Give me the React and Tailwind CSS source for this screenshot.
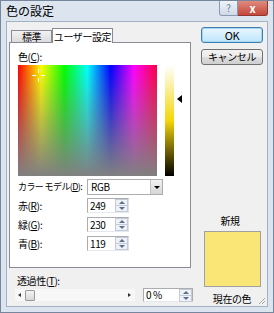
export default function App() {
  const Spin = () => (
    <div className="w-[13px] h-[13px] flex flex-col border border-[#c3cbd6] bg-[#eef2f7] shrink-0">
      <div className="flex-1 flex items-center justify-center border-b border-[#c3cbd6]">
        <div className="w-0 h-0 border-l-[3px] border-r-[3px] border-b-[3px] border-l-transparent border-r-transparent border-b-[#5a6f8e]" />
      </div>
      <div className="flex-1 flex items-center justify-center">
        <div className="w-0 h-0 border-l-[3px] border-r-[3px] border-t-[3px] border-l-transparent border-r-transparent border-t-[#5a6f8e]" />
      </div>
    </div>
  );
  const NumRow = ({ label, acc, value }) => (
    <div className="flex items-center h-[15px]">
      <span className="w-[69px] leading-[12px] whitespace-nowrap">
        {label}(<u>{acc}</u>):
      </span>
      <div className="w-[42px] h-[15px] flex items-center border border-[#abadb3] border-b-[#e3e9ef] border-r-[#dbdfe6] bg-white">
        <span className="ml-[2px] flex-1 leading-[12px]">{value}</span>
        <Spin />
      </div>
    </div>
  );
  return (
    <div className="w-[274px] h-[313px] bg-[#dbe4ef] border border-[#76869c] flex flex-col font-['Noto_Sans_CJK_JP',sans-serif] text-[10px] tracking-[-0.4px] text-black overflow-hidden">
      {/* title bar */}
      <div className="h-[20px] flex items-start shrink-0">
        <span className="ml-[5px] mt-[3px] text-[12px] leading-[14px] tracking-normal">色の設定</span>
        <div className="ml-auto mr-[5px] flex">
          <div className="w-[19px] h-[15px] rounded-bl-[3px] border border-t-0 border-[#8a9ab0] bg-[linear-gradient(to_bottom,#eef3f8,#cfdae7)] flex items-center justify-center text-[10px] leading-[10px] text-[#6b7c95]">
            ?
          </div>
          <div className="w-[30px] h-[15px] rounded-br-[3px] border border-t-0 border-l-0 border-[#8a3a32] bg-[linear-gradient(to_bottom,#e08b80,#c5473a)] flex items-center justify-center text-[11px] leading-[11px] font-bold text-white">
            x
          </div>
        </div>
      </div>
      {/* client area */}
      <div className="mx-[5px] mb-[5px] h-[286px] shrink-0 bg-[#f0f0f0] border border-[#a3b1c4] flex relative overflow-hidden">
        {/* left column */}
        <div className="flex flex-col pl-[2px] pt-[6px] shrink-0">
          <div className="flex items-end h-[14px] pl-[2px] relative z-10 shrink-0">
            <div className="w-[41px] h-[12px] border border-b-0 border-[#898c95] bg-[linear-gradient(to_bottom,#f2f2f2,#dcdcdc)] flex items-center justify-center leading-[10px] whitespace-nowrap">
              標準
            </div>
            <div className="w-[61px] h-[15px] -mb-px border border-b-0 border-[#898c95] bg-white flex items-center justify-center leading-[11px] whitespace-nowrap">
              ユーザー設定
            </div>
          </div>
          <div className="w-[182px] h-[226px] shrink-0 border border-[#898c95] bg-white pl-[8px] pt-[8px] flex flex-col overflow-hidden">
            <div className="leading-[12px]">
              色(<u>C</u>):
            </div>
            <div className="flex mt-[2px] shrink-0">
              <div className="w-[139px] h-[111px] bg-[linear-gradient(to_right,#ff0000,#ffff00,#00ff00,#00ffff,#0000ff,#ff00ff,#ff0040)] relative">
                <div className="absolute inset-0 bg-[linear-gradient(to_bottom,rgba(128,128,128,0),#808080)]" />
                <div className="absolute left-[14px] top-[4px] w-[13px] h-[13px]">
                  <div className="absolute left-[6px] top-0 w-px h-[4px] bg-white" />
                  <div className="absolute left-[6px] top-[9px] w-px h-[4px] bg-white" />
                  <div className="absolute top-[6px] left-0 h-px w-[4px] bg-white" />
                  <div className="absolute top-[6px] left-[9px] h-px w-[4px] bg-white" />
                </div>
              </div>
              <div className="ml-[8px] w-[9px] h-[111px] bg-[linear-gradient(to_bottom,#ffffff,#f5d60a_50%,#000000)]" />
              <div className="ml-[3px] mt-[30px] w-0 h-0 border-t-[4px] border-b-[4px] border-r-[5px] border-t-transparent border-b-transparent border-r-black" />
            </div>
            <div className="flex items-center mt-[3px] h-[16px] shrink-0">
              <span className="w-[69px] leading-[12px] whitespace-nowrap text-[9px] tracking-[-0.6px]">
                カラー モデル(<u>D</u>):
              </span>
              <div className="w-[76px] h-[16px] border border-[#abadb3] bg-white flex items-center">
                <span className="ml-[3px] flex-1 leading-[12px]">RGB</span>
                <div className="w-[12px] h-[14px] border-l border-[#c3c3c3] bg-[linear-gradient(to_bottom,#f2f2f2,#d6d6d6)] flex items-center justify-center">
                  <div className="w-0 h-0 border-l-[3px] border-r-[3px] border-t-[3px] border-l-transparent border-r-transparent border-t-black" />
                </div>
              </div>
            </div>
            <div className="flex flex-col gap-[4px] mt-[3px] shrink-0">
              <NumRow label="赤" acc="R" value="249" />
              <NumRow label="緑" acc="G" value="230" />
              <NumRow label="青" acc="B" value="119" />
            </div>
          </div>
          <div className="mt-[7px] ml-[8px] leading-[12px] whitespace-nowrap">
            透過性(<u>T</u>):
          </div>
          <div className="flex items-center mt-px ml-[6px]">
            <div className="w-[120px] h-[12px] bg-[#f7f7f7] flex items-center">
              <div className="ml-[3px] w-0 h-0 border-t-[2px] border-b-[2px] border-r-[3px] border-t-transparent border-b-transparent border-r-[#333]" />
              <div className="ml-[4px] w-[10px] h-[11px] border border-[#9a9a9a] rounded-[1px] bg-[linear-gradient(to_bottom,#f4f4f4,#d8d8d8)]" />
              <div className="ml-auto mr-[4px] w-0 h-0 border-t-[2px] border-b-[2px] border-l-[3px] border-t-transparent border-b-transparent border-l-[#333]" />
            </div>
            <div className="ml-[8px] w-[50px] h-[14px] flex items-center border border-[#abadb3] border-b-[#e3e9ef] bg-white">
              <span className="ml-[2px] flex-1 leading-[12px]">0 %</span>
              <Spin />
            </div>
          </div>
        </div>
        {/* right column */}
        <div className="flex flex-col items-center ml-[8px] pt-[5px] w-[62px] shrink-0">
          <div className="w-[62px] h-[16px] shrink-0 rounded-[3px] border border-[#3c7fb1] bg-[linear-gradient(to_bottom,#eaf6fd,#bee6fd)] shadow-[inset_0_0_0_1px_#a6d6f2] flex items-center justify-center leading-[12px] text-[11px]">
            OK
          </div>
          <div className="mt-[6px] w-[62px] h-[16px] shrink-0 rounded-[3px] border border-[#707070] bg-[linear-gradient(to_bottom,#f2f2f2,#ebebeb_50%,#dddddd_50%,#cfcfcf)] flex items-center justify-center leading-[12px] whitespace-nowrap">
            キャンセル
          </div>
          <div className="mt-[150px] leading-[12px] -ml-[4px] whitespace-nowrap">新規</div>
          <div className="mt-[4px] w-[57px] h-[56px] shrink-0 border border-[#a0a0a0] bg-[#f9e677]" />
          <div className="mt-[7px] leading-[10px] whitespace-nowrap">現在の色</div>
        </div>
        {/* size grip */}
        <div className="absolute right-[2px] bottom-[2px] w-[7px] h-[7px] bg-[linear-gradient(135deg,transparent_50%,#a9a9a9_50%,#a9a9a9_60%,transparent_60%,transparent_75%,#a9a9a9_75%,#a9a9a9_85%,transparent_85%)]" />
      </div>
    </div>
  );
}
